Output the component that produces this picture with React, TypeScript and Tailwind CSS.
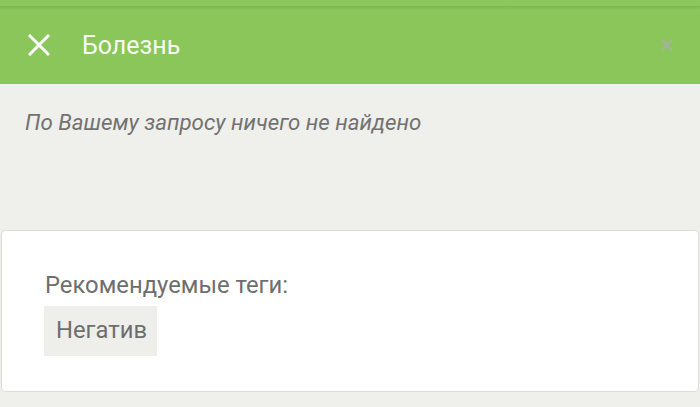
import React from "react";

export default function App() {
  const font = { fontFamily: "Roboto, 'Noto Sans', sans-serif" };
  return (
    <div className="w-[700px] h-[407px] overflow-hidden bg-[#eff0ec] flex flex-col" style={font}>
      <div className="h-[84px] bg-[#8bc65a] flex flex-col shrink-0">
        <div className="h-[6px] bg-[#8cc75b]" />
        <div className="h-[4px] bg-gradient-to-b from-[#7fb552] to-[#8bc65a]" />
        <div className="flex-1 flex items-center pb-[4px]">
          <svg className="ml-[28px] w-[22px] h-[22px]" viewBox="0 0 22 22">
            <path d="M2 2 L20 20 M20 2 L2 20" stroke="#ffffff" strokeWidth="3" strokeLinecap="square" />
          </svg>
          <span className="ml-[32px] text-[25px] leading-none text-[#f6fbf1]">Болезнь</span>
          <div className="flex-1" />
          <svg className="mr-[27px] w-[12px] h-[12px] blur-[0.6px]" viewBox="0 0 12 12">
            <path d="M1 1 L11 11 M11 1 L1 11" stroke="#a3b39a" strokeWidth="2.5" />
          </svg>
        </div>
      </div>
      <div className="pl-[25px] pt-[24px] h-[146px] shrink-0">
        <p className="italic text-[22.3px] leading-[28px] text-[#727272]">По Вашему запросу ничего не найдено</p>
      </div>
      <div className="mx-[1px] h-[162px] bg-white rounded-[4px] border border-[#dddedb] flex flex-col pl-[42px] pt-[39px]">
        <p className="text-[23.8px] leading-[30px] text-[#6e6e6e] ml-[1px]">Рекомендуемые теги:</p>
        <div className="mt-[6px] self-start bg-[#eeefeb] h-[50px] pl-[12px] pr-[10px] flex items-center">
          <span className="text-[23.8px] leading-none text-[#6e6e6e]">Негатив</span>
        </div>
      </div>
    </div>
  );
}
